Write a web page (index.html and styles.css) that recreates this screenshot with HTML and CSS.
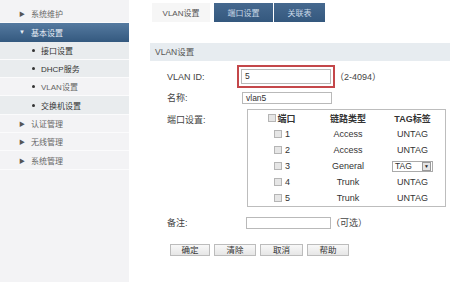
FILE: index.html
```html
<!DOCTYPE html>
<html lang="zh-CN">
  <head>
    <meta charset="UTF-8" />
    <meta name="viewport" content="width=device-width, initial-scale=1.0" />
    <link rel="stylesheet" href="styles.css">
    <title>VLAN设置</title>
  </head>
  <body>
    <div class="page">
      <ul class="menu">
        <li class="menu__item"><span class="menu__arrow">&#9654;</span>系统维护</li>
        <li class="menu__item menu__item_open"><span class="menu__arrow">&#9660;</span>基本设置</li>
        <li class="menu__sub"><span class="menu__dot"></span>接口设置</li>
        <li class="menu__sub"><span class="menu__dot"></span>DHCP服务</li>
        <li class="menu__sub menu__sub_current"><span class="menu__dot"></span>VLAN设置</li>
        <li class="menu__sub"><span class="menu__dot"></span>交换机设置</li>
        <li class="menu__item"><span class="menu__arrow">&#9654;</span>认证管理</li>
        <li class="menu__item"><span class="menu__arrow">&#9654;</span>无线管理</li>
        <li class="menu__item"><span class="menu__arrow">&#9654;</span>系统管理</li>
      </ul>

      <div class="main">
        <div class="tabs">
          <span class="tab tab_active">VLAN设置</span>
          <span class="tab tab_port">端口设置</span>
          <span class="tab tab_assoc">关联表</span>
        </div>

        <div class="section">VLAN设置</div>

        <div class="form">
          <div class="row row_id">
            <span class="label">VLAN ID:</span>
            <span class="mark"><span class="field field_big">5</span></span>
            <span class="hint">（2-4094）</span>
          </div>
          <div class="row row_name">
            <span class="label">名称:</span>
            <span class="field">vlan5</span>
          </div>
          <div class="row row_ports">
            <span class="label label_top">端口设置:</span>
            <div class="ports">
              <div class="ports__row ports__head">
                <span class="ports__cell"><i class="box"></i>端口</span>
                <span class="ports__cell">链路类型</span>
                <span class="ports__cell">TAG标签</span>
              </div>
              <div class="ports__row">
                <span class="ports__cell ports__num"><i class="box"></i>1</span>
                <span class="ports__cell">Access</span>
                <span class="ports__cell">UNTAG</span>
              </div>
              <div class="ports__row">
                <span class="ports__cell ports__num"><i class="box"></i>2</span>
                <span class="ports__cell">Access</span>
                <span class="ports__cell">UNTAG</span>
              </div>
              <div class="ports__row">
                <span class="ports__cell ports__num"><i class="box"></i>3</span>
                <span class="ports__cell">General</span>
                <span class="ports__cell"><span class="select">TAG<span class="select__btn">&#9660;</span></span></span>
              </div>
              <div class="ports__row">
                <span class="ports__cell ports__num"><i class="box"></i>4</span>
                <span class="ports__cell">Trunk</span>
                <span class="ports__cell">UNTAG</span>
              </div>
              <div class="ports__row">
                <span class="ports__cell ports__num"><i class="box"></i>5</span>
                <span class="ports__cell">Trunk</span>
                <span class="ports__cell">UNTAG</span>
              </div>
            </div>
          </div>
          <div class="row row_note">
            <span class="label">备注:</span>
            <span class="field field_note"></span>
            <span class="hint">（可选）</span>
          </div>
          <div class="buttons">
            <button class="button button_ok">确定</button>
            <button class="button button_clear">清除</button>
            <button class="button button_cancel">取消</button>
            <button class="button button_help">帮助</button>
          </div>
        </div>
      </div>
    </div>
  </body>
</html>
```

FILE: styles.css
```css
*,
*::after,
*::before {
  box-sizing: border-box;
  margin: 0;
  padding: 0;
}

ul {
  list-style: none;
}

body {
  background: #fff;
  font-family: "Liberation Sans", "Noto Sans CJK SC", sans-serif;
  color: #333;
  overflow: hidden;
}

.page {
  display: flex;
  width: 450px;
  height: 289px;
}

/* sidebar */

.menu {
  flex: 0 0 129px;
  height: 282px;
  background: #f3f3f5;
  padding-top: 5px;
  font-size: 8px;
}

.menu__item,
.menu__sub {
  display: flex;
  align-items: center;
  height: 18.3px;
  border-bottom: 1px solid #fbfbfc;
  color: #666;
}

.menu__item {
  padding-left: 19px;
}

.menu__arrow {
  font-size: 6px;
  width: 12px;
  color: #555;
}

.menu__item_open {
  background: linear-gradient(#557aa0, #34597f);
  color: #e8eef5;
  border-bottom: none;
}

.menu__item_open .menu__arrow {
  color: #e8eef5;
}

.menu__sub {
  padding-left: 32px;
  background: #e9ecee;
  color: #333;
}

.menu__sub_current {
  background: #f3f3f5;
  color: #666;
}

.menu__dot {
  width: 3px;
  height: 3px;
  border-radius: 50%;
  background: #333;
  margin-right: 6px;
}

/* main */

.main {
  flex: 1;
  padding: 3px 0 0 21px;
}

.tabs {
  display: flex;
  height: 19px;
  padding-left: 2px;
  gap: 4px;
  font-size: 8px;
}

.tab {
  display: flex;
  align-items: center;
  justify-content: center;
  height: 19px;
}

.tab_active {
  width: 58px;
  background: #f6f6f6;
  color: #555;
}

.tab_port {
  width: 59px;
  background: linear-gradient(#46698f, #34587e);
  color: #c9d8e8;
}

.tab_assoc {
  width: 51px;
  margin-left: -3px;
  background: linear-gradient(#46698f, #34587e);
  color: #c9d8e8;
}

.section {
  margin-top: 21px;
  height: 18px;
  line-height: 18px;
  padding-left: 5px;
  background: #e7ecf0;
  font-size: 8.5px;
  color: #555;
}

.form {
  padding-left: 17px;
  font-size: 9px;
}

.row {
  display: flex;
  align-items: center;
}

.label {
  width: 75px;
  color: #444;
}

.label_top {
  align-self: flex-start;
  padding-top: 4px;
}

.row_id {
  margin-top: 4px;
}

.row_name {
  margin-top: 3px;
}

.row_ports {
  margin-top: 5px;
}

.row_note {
  margin-top: 9px;
}

.mark {
  display: inline-block;
  margin-left: -5px;
  padding: 2px;
  border: 2px solid #c4474a;
}

.field {
  display: inline-block;
  width: 90px;
  height: 12px;
  line-height: 10px;
  padding-left: 3px;
  border: 1px solid #b9b9b9;
  background: #fff;
  font-size: 8.5px;
}

.field_big {
  height: 15px;
  line-height: 13px;
}

.field_note {
  width: 85px;
  margin-left: 4px;
}

.hint {
  margin-left: 0;
  color: #444;
}

/* port table */

.ports {
  width: 199px;
  margin-left: 5px;
  border: 1px solid #bdbdbd;
}

.ports__row {
  display: grid;
  grid-template-columns: 68px 64px 1fr;
  height: 16px;
  align-items: center;
}

.ports__head {
  font-weight: bold;
  color: #333;
}

.ports__cell {
  display: flex;
  align-items: center;
  justify-content: center;
}

.ports__num .box {
  margin-right: 3px;
}

.box {
  display: inline-block;
  width: 8px;
  height: 8px;
  border: 1px solid #b5b5b5;
  background: #e6e6e6;
  margin-right: 1px;
}

.select {
  display: inline-flex;
  align-items: center;
  justify-content: space-between;
  width: 41px;
  height: 11px;
  padding-left: 2px;
  border: 1px solid #aaa;
  background: #fff;
  font-size: 8.5px;
}

.select__btn {
  display: flex;
  align-items: center;
  justify-content: center;
  width: 9px;
  height: 9px;
  margin-right: 1px;
  border: 1px solid #999;
  background: #e4e4e4;
  font-size: 5px;
  color: #222;
}

.buttons {
  display: flex;
  margin-top: 15px;
  gap: 4px;
}

.button {
  height: 12px;
  border: 1px solid #bcbcbc;
  background: linear-gradient(#f8f8f8, #e6e6e6);
  font-family: "Liberation Sans", "Noto Sans CJK SC", sans-serif;
  font-size: 8.5px;
  line-height: 10px;
  color: #333;
}

.button_ok {
  width: 40px;
  margin-left: 3px;
}

.button_clear {
  width: 42px;
}

.button_cancel {
  width: 43px;
}

.button_help {
  width: 42px;
}
```
